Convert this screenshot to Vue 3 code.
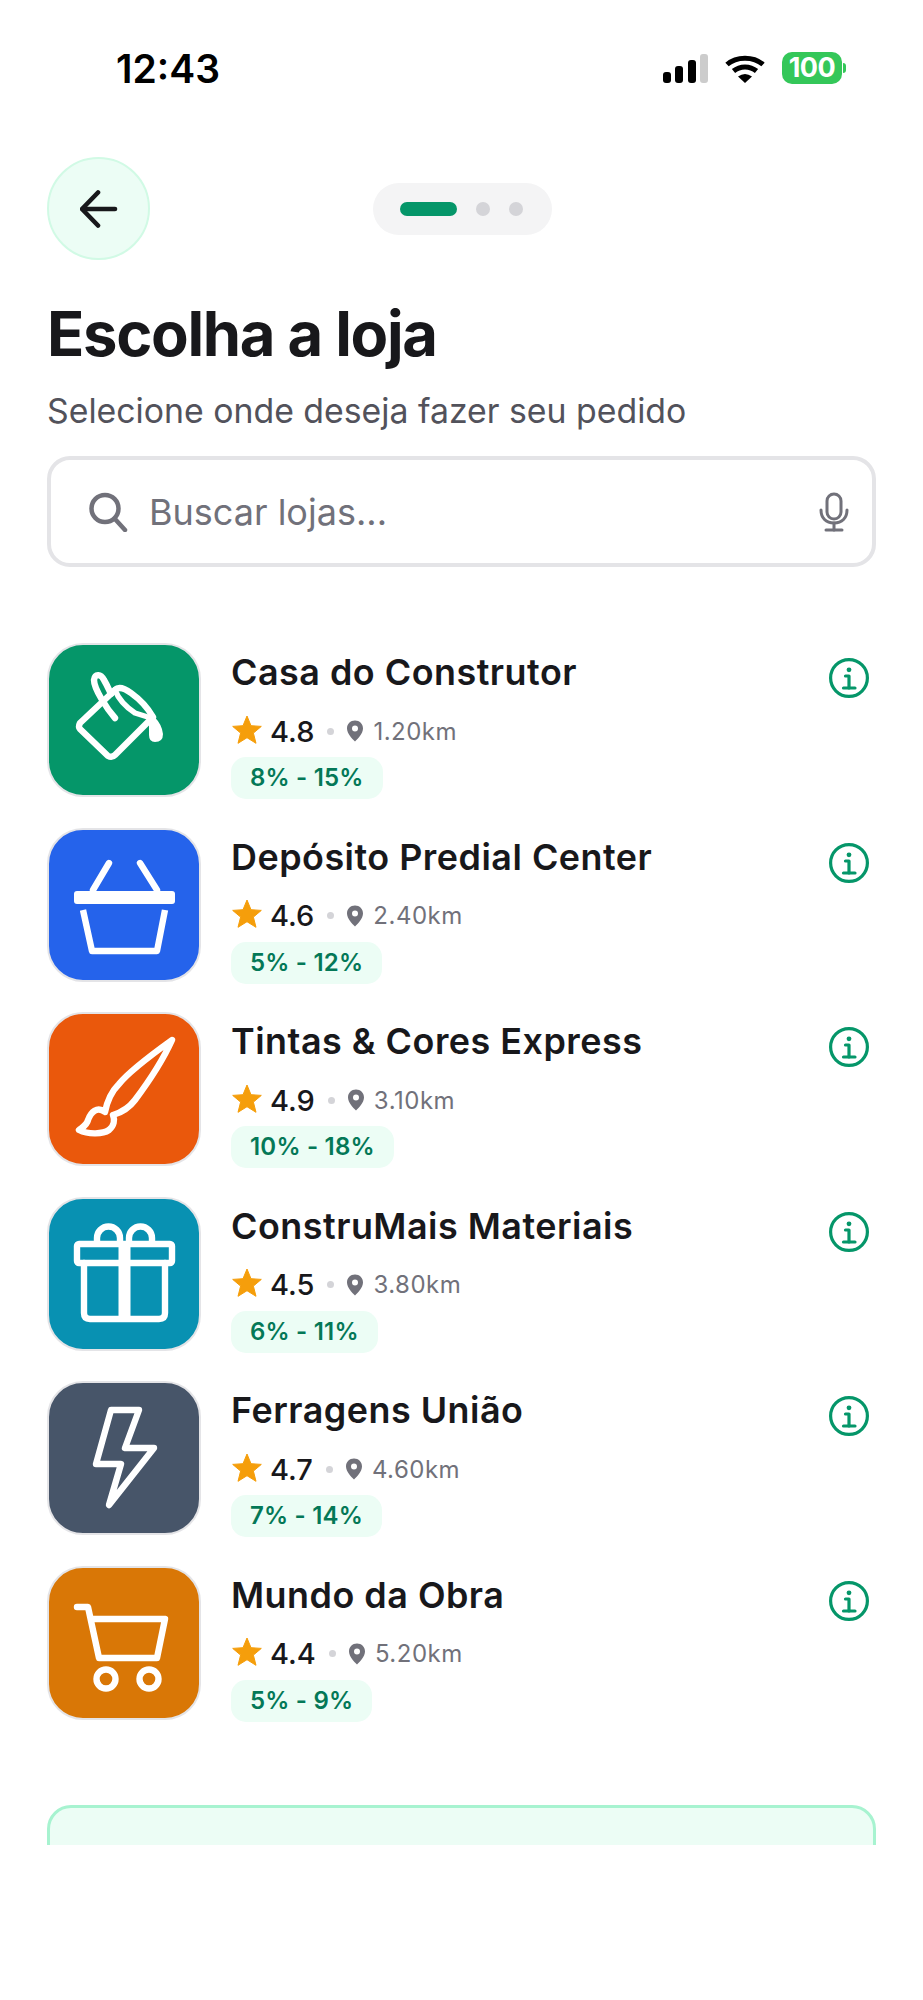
<template>
  <div class="screen">
    <div class="status-bar">
      <span class="time">12:43</span>
      <div class="status-icons">
        <div class="signal">
          <i class="bar b1"></i>
          <i class="bar b2"></i>
          <i class="bar b3"></i>
          <i class="bar b4"></i>
        </div>
        <svg class="wifi" width="40" height="28" viewBox="0 0 40 28">
          <path d="M2 9.500C11.500 1 28.500 1 38 9.500" fill="none" stroke="#000" stroke-width="5" />
          <path d="M8.500 16C15 10.500 25 10.500 31.500 16" fill="none" stroke="#000" stroke-width="5" />
          <path d="M13 21.500Q20 16.500 27 21.500L20 28Z" fill="#000" />
        </svg>
        <div class="battery">
          <div class="battery-body">100</div>
          <i class="battery-tip"></i>
        </div>
      </div>
    </div>

    <div class="content">
      <div class="nav-row">
        <button class="back-btn">
          <svg width="38" height="38" viewBox="0 0 38 38" fill="none" stroke="#18181b" stroke-width="4.600" stroke-linecap="round" stroke-linejoin="round">
            <path d="M18 2.500L2 19L18 35.500" />
            <path d="M3 19H35" />
          </svg>
        </button>
        <div class="steps">
          <i class="step active"></i>
          <i class="step"></i>
          <i class="step"></i>
        </div>
      </div>

      <h1 class="title">Escolha a loja</h1>
      <p class="subtitle">Selecione onde deseja fazer seu pedido</p>

      <div class="search">
        <svg class="search-icon" width="40" height="40" viewBox="0 0 40 40" fill="none" stroke="#71717a" stroke-width="4.500" stroke-linecap="round">
          <circle cx="17" cy="16.500" r="13.500" />
          <path d="M27 27L37 38" />
        </svg>
        <span class="placeholder">Buscar lojas...</span>
        <svg class="mic" width="30" height="40" viewBox="0 0 30 40" fill="none" stroke="#71717a" stroke-width="3" stroke-linecap="round">
          <rect x="8" y="2" width="14" height="25" rx="7" />
          <path d="M2 18C2 26 7 31 15 31C23 31 28 26 28 18" />
          <path d="M15 31V38" />
          <path d="M7 38H23" />
        </svg>
      </div>

      <div class="store-list">
        <div v-for="store in stores" :key="store.name" class="store">
          <div class="logo" :style="{ background: store.color }">
            <svg width="154" height="154" viewBox="0 0 154 154" fill="none" stroke="#fff" stroke-width="6.400" stroke-linecap="round" stroke-linejoin="round">
              <template v-if="store.icon === 'bucket'">
                <path d="M68 47L33 80Q31 84 33 86L61 113Q65 115 68 112L104 76" />
                <path d="M68 47Q73 42 84 50Q98 60 106 74" />
                <path d="M68 47Q73 60 88 70L104 75" stroke-width="5.500" />
                <path d="M68 75C60 66 47 46 47 37C48 30 54 31 57 37C60 42 62 47 64 51" />
                <path d="M103 75L103 92Q103 98 108 98Q115 98 115 91Q114 82 107 75Z" fill="#fff" stroke-width="2" />
              </template>
              <template v-else-if="store.icon === 'basket'">
                <path d="M62 36L46 63M93 36L110 63" />
                <rect x="27" y="64" width="101" height="13" rx="3" fill="#fff" stroke="none" />
                <path d="M36 83L45 124H110L118 83" stroke-linecap="butt" />
              </template>
              <template v-else-if="store.icon === 'brush'">
                <path d="M125 28C100 46 80 62 72 72C64 80 60 90 58 100C50 94 44 100 41 108C40 113 36 115 32 118C42 123 56 122 62 118C67 114 68 108 66 103C76 100 82 96 88 88C100 72 116 48 125 28Z" />
              </template>
              <template v-else-if="store.icon === 'gift'">
                <rect x="30" y="48" width="95" height="19" rx="2" />
                <path d="M37 67V117Q37 123 43 123H112Q118 123 118 117V67" />
                <path d="M77.500 46V123" stroke-width="12" stroke-linecap="butt" />
                <path d="M50 46V42A11.500 11.500 0 0 1 73 42V46" />
                <path d="M82 46V42A11.500 11.500 0 0 1 105 42V46" />
              </template>
              <template v-else-if="store.icon === 'bolt'">
                <path d="M64 29H92L78 67H107L62 124L74 83H49Z" />
              </template>
              <template v-else>
                <path d="M30 42H41L52 93H110L118 54H45" />
                <circle cx="59" cy="114" r="9.500" />
                <circle cx="102" cy="114" r="9.500" />
              </template>
            </svg>
          </div>

          <div class="store-info">
            <div class="store-name">{{ store.name }}</div>
            <div class="store-meta">
              <svg class="star" width="30" height="29" viewBox="0 0 30 29">
                <path d="M15 1L19 10.700L29.300 11.400L21.400 18.100L24 28.300L15 22.700L6 28.300L8.600 18.100L0.700 11.400L11 10.700Z" fill="#f59e0b" stroke="#f59e0b" stroke-width="1" stroke-linejoin="round" />
              </svg>
              <span class="rating">{{ store.rating }}</span>
              <i class="sep"></i>
              <svg class="pin" width="18" height="22" viewBox="0 0 18 22">
                <path fill-rule="evenodd" d="M9 0.500C13.600 0.500 17 4 17 8.500C17 13.500 12 18.500 9 21.500C6 18.500 1 13.500 1 8.500C1 4 4.400 0.500 9 0.500ZM9 5.500A3 3 0 1 0 9 11.500A3 3 0 1 0 9 5.500Z" fill="#71717a" />
              </svg>
              <span class="distance">{{ store.distance }}</span>
            </div>
            <span class="cashback">{{ store.cashback }}</span>
          </div>

          <button class="info-btn">
            <svg width="40" height="40" viewBox="0 0 40 40" fill="none" stroke="#059669" stroke-width="3.200" stroke-linecap="round" stroke-linejoin="round">
              <circle cx="20" cy="20" r="18.400" />
              <path d="M16.500 18H20V30" />
              <path d="M14.500 30H26" />
              <circle cx="20" cy="11.800" r="2.400" fill="#059669" stroke="none" />
            </svg>
          </button>
        </div>
      </div>

      <div class="promo-card"></div>
    </div>
  </div>
</template>

<script setup>
const stores = [
  { name: 'Casa do Construtor', rating: '4.8', distance: '1.20km', cashback: '8% - 15%', color: '#059669', icon: 'bucket' },
  { name: 'Depósito Predial Center', rating: '4.6', distance: '2.40km', cashback: '5% - 12%', color: '#2563eb', icon: 'basket' },
  { name: 'Tintas & Cores Express', rating: '4.9', distance: '3.10km', cashback: '10% - 18%', color: '#ea580c', icon: 'brush' },
  { name: 'ConstruMais Materiais', rating: '4.5', distance: '3.80km', cashback: '6% - 11%', color: '#0891b2', icon: 'gift' },
  { name: 'Ferragens União', rating: '4.7', distance: '4.60km', cashback: '7% - 14%', color: '#475569', icon: 'bolt' },
  { name: 'Mundo da Obra', rating: '4.4', distance: '5.20km', cashback: '5% - 9%', color: '#d97706', icon: 'cart' },
]
</script>

<style scoped>
.screen {
  width: 923px;
  height: 2000px;
  background: #fff;
  font-family: Inter, "Liberation Sans", sans-serif;
  color: #18181b;
}

.status-bar {
  height: 157px;
  box-sizing: border-box;
  padding: 47px 77px 0 116px;
  display: flex;
  justify-content: space-between;
  align-items: flex-start;
}
.time {
  font-size: 39px;
  line-height: 44px;
  font-weight: 600;
  color: #000;
}
.status-icons {
  display: flex;
  align-items: flex-start;
  margin-top: 5px;
}
.signal {
  display: flex;
  align-items: flex-end;
  gap: 4.500px;
  height: 29px;
  margin-top: 2px;
  margin-right: 17px;
}
.bar {
  display: block;
  width: 8px;
  border-radius: 3px;
  background: #000;
}
.b1 { height: 11px; }
.b2 { height: 17px; }
.b3 { height: 23px; }
.b4 { height: 29px; background: #ccc; }
.wifi {
  margin-top: 3px;
  margin-right: 17px;
}
.battery {
  display: flex;
  align-items: center;
}
.battery-body {
  width: 60px;
  height: 32px;
  border-radius: 10px;
  background: #34c759;
  color: #fff;
  font-size: 27px;
  line-height: 32px;
  font-weight: 700;
  text-align: center;
  letter-spacing: -0.5px;
}
.battery-tip {
  display: block;
  width: 3px;
  height: 10px;
  margin-left: 1px;
  border-radius: 0 3px 3px 0;
  background: #34c759;
}

.content {
  height: 1688px;
  overflow: hidden;
  box-sizing: border-box;
  padding: 0 47px;
}
.nav-row {
  position: relative;
  height: 103px;
}
.back-btn {
  width: 103px;
  height: 103px;
  padding: 0;
  border: 2.500px solid #d1fae5;
  border-radius: 50%;
  background: #ecfdf5;
  display: flex;
  align-items: center;
  justify-content: center;
}
.steps {
  position: absolute;
  left: 326px;
  top: 26px;
  width: 179px;
  height: 52px;
  box-sizing: border-box;
  padding: 0 27px;
  display: flex;
  align-items: center;
  gap: 19px;
  border-radius: 26px;
  background: #f4f4f5;
}
.step {
  display: block;
  width: 14px;
  height: 14px;
  border-radius: 50%;
  background: #d4d4d8;
}
.step.active {
  width: 57px;
  border-radius: 7px;
  background: #059669;
}

.title {
  margin: 37px 0 0;
  font-size: 61.500px;
  line-height: 74px;
  font-weight: 700;
  letter-spacing: -1.300px;
  color: #18181b;
}
.subtitle {
  margin: 18px 0 0;
  font-size: 33.800px;
  line-height: 44px;
  color: #52525b;
}
.search {
  margin-top: 23px;
  height: 111px;
  box-sizing: border-box;
  border: 4px solid #e4e4e7;
  border-radius: 23px;
  display: flex;
  align-items: center;
  padding: 0 23px 0 37px;
}
.search-icon {
  flex-shrink: 0;
}
.placeholder {
  margin-left: 21px;
  flex: 1;
  font-size: 36px;
  color: #71717a;
}

.store-list {
  margin-top: 76px;
  display: flex;
  flex-direction: column;
  gap: 30.600px;
}
.store {
  display: flex;
  align-items: flex-start;
  height: 154px;
}
.logo {
  position: relative;
  flex-shrink: 0;
  width: 154px;
  height: 154px;
  box-sizing: border-box;
  border: 2.500px solid #e4e4e7;
  border-radius: 36px;
  overflow: hidden;
}
.logo svg {
  position: absolute;
  left: -2.500px;
  top: -2.500px;
}
.store-info {
  flex: 1;
  margin-left: 30px;
  padding-top: 6px;
  min-width: 0;
}
.store-name {
  font-size: 35.900px;
  line-height: 46px;
  font-weight: 600;
  letter-spacing: 0.500px;
  color: #18181b;
}
.store-meta {
  margin-top: 19px;
  height: 34px;
  display: flex;
  align-items: center;
  padding-left: 1px;
}
.star {
  margin-top: -4px;
}
.rating {
  margin-left: 8px;
  font-size: 29px;
  font-weight: 500;
  color: #18181b;
}
.sep {
  display: block;
  width: 7px;
  height: 7px;
  margin-left: 13px;
  border-radius: 50%;
  background: #d4d4d8;
}
.pin {
  margin-left: 12px;
}
.distance {
  margin-left: 9px;
  font-size: 24px;
  letter-spacing: 0.500px;
  color: #71717a;
}
.cashback {
  display: inline-block;
  margin-top: 9px;
  height: 42px;
  line-height: 42px;
  padding: 0 19px;
  border-radius: 15px;
  background: #ecfdf5;
  color: #047857;
  font-size: 24px;
  font-weight: 600;
  letter-spacing: 0.200px;
}
.info-btn {
  flex-shrink: 0;
  margin-top: 15px;
  margin-right: 7px;
  padding: 0;
  width: 40px;
  height: 40px;
  border: none;
  background: none;
}

.promo-card {
  margin-top: 85px;
  height: 200px;
  box-sizing: border-box;
  border: 3px solid #a7f3d0;
  border-radius: 24px;
  background: #ecfdf5;
}
</style>
